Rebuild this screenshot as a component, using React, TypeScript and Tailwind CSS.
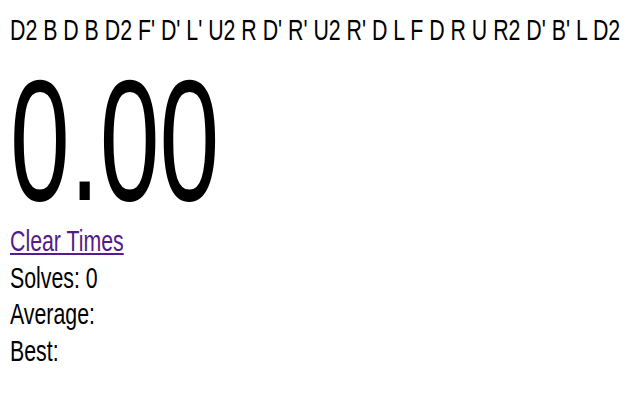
import React from "react";

export default function App() {
  return (
    <div
      className="w-[640px] h-[400px] overflow-hidden bg-white text-black pt-[12px] pl-[10px]"
      style={{ fontFamily: '"Liberation Sans", Arial, sans-serif' }}
    >
      <div className="h-[36px] text-[29px] leading-[36px] whitespace-nowrap">
        <span className="inline-block origin-left scale-x-[0.735]">
          D2 B D B D2 F' D' L' U2 R D' R' U2 R' D L F D R U R2 D' B' L D2
        </span>
      </div>
      <div className="mt-[9px] h-[166px] text-[172px] leading-[166px] whitespace-nowrap">
        <span className="inline-block origin-left scale-x-[0.625]">0.00</span>
      </div>
      <div className="text-[29px] leading-[36.7px] whitespace-nowrap">
        <div>
          <a href="#" className="inline-block origin-left scale-x-[0.735] text-[#551a8b] underline">
            Clear Times
          </a>
        </div>
        <div>
          <span className="inline-block origin-left scale-x-[0.735]">Solves: 0</span>
        </div>
        <div>
          <span className="inline-block origin-left scale-x-[0.735]">Average:</span>
        </div>
        <div>
          <span className="inline-block origin-left scale-x-[0.735]">Best:</span>
        </div>
      </div>
    </div>
  );
}
